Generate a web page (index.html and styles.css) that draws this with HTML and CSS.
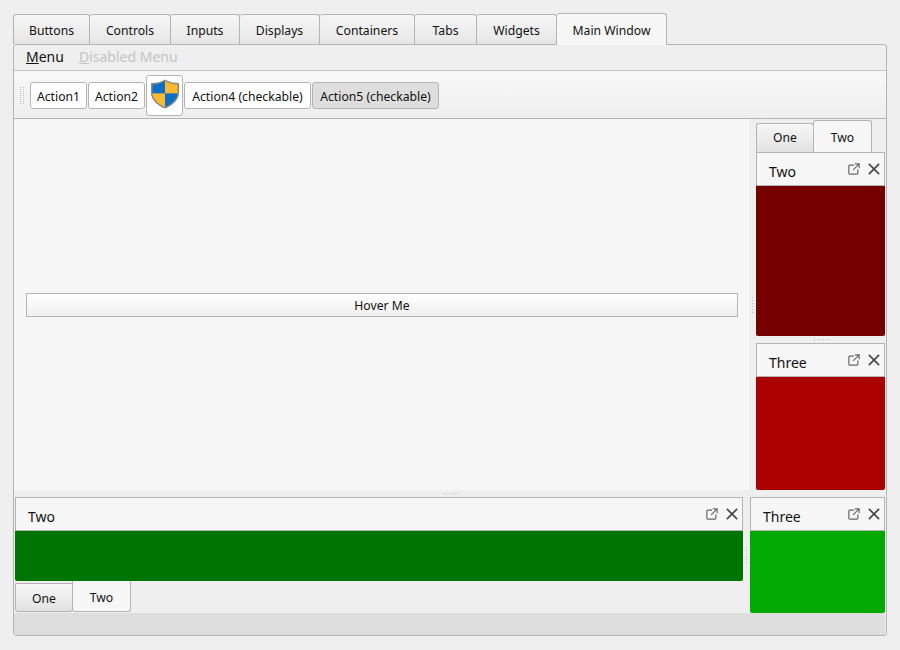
FILE: index.html
```html
<!DOCTYPE html>
<html lang="en">
<head>
<meta charset="UTF-8" />
<title>Main Window</title>
<link rel="stylesheet" href="styles.css">
</head>
<body>

<div class="app">
  <div class="tabs">
    <div class="tab tab-buttons">Buttons</div>
    <div class="tab tab-controls">Controls</div>
    <div class="tab tab-inputs">Inputs</div>
    <div class="tab tab-displays">Displays</div>
    <div class="tab tab-containers">Containers</div>
    <div class="tab tab-tabs">Tabs</div>
    <div class="tab tab-widgets">Widgets</div>
    <div class="tab tab-main active">Main Window</div>
  </div>

  <div class="pane">
    <div class="menubar">
      <span class="menu"><u>M</u>enu</span>
      <span class="menu disabled"><u>D</u>isabled Menu</span>
    </div>

    <div class="toolbar">
      <div class="grip"></div>
      <div class="tool tool-short">Action1</div>
      <div class="tool tool-short">Action2</div>
      <div class="tool tool-icon">
        <svg class="shield" width="28" height="30" viewBox="0 0 28 30">
          <path d="M14 0.500 C10 3 6 4 0 4 V14 C0 21 7 27 14 29.500 C21 27 28 21 28 14 V4 C22 4 18 3 14 0.500 Z" fill="#8a8a80"/>
          <path d="M14 2 C10.500 4.200 6 5.300 1.500 5.400 V14.500 H14 Z" fill="#0f6fc6"/>
          <path d="M14 2 C17.500 4.200 22 5.300 26.500 5.400 V14.500 H14 Z" fill="#fbb92f"/>
          <path d="M1.500 14.500 H14 V28 C8 25.500 1.800 20.500 1.500 14.500 Z" fill="#fbb92f"/>
          <path d="M26.500 14.500 H14 V28 C20 25.500 26.200 20.500 26.500 14.500 Z" fill="#0f6fc6"/>
        </svg>
      </div>
      <div class="tool tool-long">Action4 (checkable)</div>
      <div class="tool tool-long checked">Action5 (checkable)</div>
    </div>

    <div class="middle">
      <div class="central">
        <div class="hover-btn">Hover Me</div>
      </div>
      <div class="right-col">
        <div class="vgrip"></div>
        <div class="right-docks">
          <div class="dock-tabs">
            <div class="dock-tab">One</div>
            <div class="dock-tab active">Two</div>
          </div>
          <div class="dock">
            <div class="dock-title">
              <span class="dock-name">Two</span>
              <svg class="float-icon" viewBox="0 0 14 14"><path d="M7 2.500 H2 Q1 2.500 1 3.500 V12 Q1 13 2 13 H10.500 Q11.500 13 11.500 12 V7.500 M8 1 H13 V6 M13 1 L6 8" fill="none"/></svg>
              <svg class="close-icon" viewBox="0 0 14 14"><path d="M1 1 L13 13 M13 1 L1 13" fill="none"/></svg>
            </div>
            <div class="fill fill-darkred"></div>
          </div>
          <div class="hgrip"></div>
          <div class="dock">
            <div class="dock-title">
              <span class="dock-name">Three</span>
              <svg class="float-icon" viewBox="0 0 14 14"><path d="M7 2.500 H2 Q1 2.500 1 3.500 V12 Q1 13 2 13 H10.500 Q11.500 13 11.500 12 V7.500 M8 1 H13 V6 M13 1 L6 8" fill="none"/></svg>
              <svg class="close-icon" viewBox="0 0 14 14"><path d="M1 1 L13 13 M13 1 L1 13" fill="none"/></svg>
            </div>
            <div class="fill fill-red"></div>
          </div>
        </div>
      </div>
    </div>

    <div class="hgrip hgrip-wide"></div>

    <div class="bottom">
      <div class="bottom-left">
        <div class="dock">
          <div class="dock-title">
            <span class="dock-name">Two</span>
            <svg class="float-icon" viewBox="0 0 14 14"><path d="M7 2.500 H2 Q1 2.500 1 3.500 V12 Q1 13 2 13 H10.500 Q11.500 13 11.500 12 V7.500 M8 1 H13 V6 M13 1 L6 8" fill="none"/></svg>
            <svg class="close-icon" viewBox="0 0 14 14"><path d="M1 1 L13 13 M13 1 L1 13" fill="none"/></svg>
          </div>
          <div class="fill fill-darkgreen"></div>
        </div>
        <div class="dock-tabs south">
          <div class="dock-tab">One</div>
          <div class="dock-tab active">Two</div>
        </div>
      </div>
      <div class="vgrip"></div>
      <div class="dock bottom-right">
        <div class="dock-title">
          <span class="dock-name">Three</span>
          <svg class="float-icon" viewBox="0 0 14 14"><path d="M7 2.500 H2 Q1 2.500 1 3.500 V12 Q1 13 2 13 H10.500 Q11.500 13 11.500 12 V7.500 M8 1 H13 V6 M13 1 L6 8" fill="none"/></svg>
          <svg class="close-icon" viewBox="0 0 14 14"><path d="M1 1 L13 13 M13 1 L1 13" fill="none"/></svg>
        </div>
        <div class="fill fill-green"></div>
      </div>
    </div>

    <div class="statusbar"></div>
  </div>
</div>

</body>
</html>
```

FILE: styles.css
```css
* {
  box-sizing: border-box;
}
body {
  margin: 0;
  height: 650px;
  overflow: hidden;
  background: #efefef;
  color: #111;
  font-family: 'Noto Sans', sans-serif;
  font-size: 12.2px;
}
.app {
  padding: 13px 13px 0 13px;
}

/* top tabs */
.tabs {
  display: flex;
  align-items: flex-end;
  height: 32px;
  margin-bottom: -1px;
  position: relative;
  z-index: 1;
}
.tab {
  height: 30px;
  margin-bottom: 1px;
  padding-top: 2px;
  display: flex;
  align-items: center;
  justify-content: center;
  background: linear-gradient(to bottom, #f6f6f6, #e6e6e6);
  border: 1px solid #b4b4b4;
  border-bottom: none;
  border-left: none;
  border-radius: 3px 3px 0 0;
}
.tab:first-child {
  border-left: 1px solid #b4b4b4;
}
.tab.active {
  height: 32px;
  margin-bottom: 0;
  padding-top: 2px;
  background: #f7f7f7;
}
.tab-buttons { width: 77px; }
.tab-controls { width: 81px; }
.tab-inputs { width: 69px; }
.tab-displays { width: 80px; }
.tab-containers { width: 95px; }
.tab-tabs { width: 62px; }
.tab-widgets { width: 80px; }
.tab-main { width: 110px; }

.pane {
  width: 874px;
  height: 592px;
  border: 1px solid #b4b4b4;
  border-radius: 3px;
  background: #efefef;
  display: flex;
  flex-direction: column;
}

/* menu */
.menubar {
  height: 26px;
  flex: none;
  display: flex;
  align-items: center;
  gap: 15px;
  padding: 0 0 2px 12px;
  border-bottom: 1px solid #c8c8c8;
  font-size: 14px;
}
.menu.disabled {
  color: #c4c4c4;
}

/* toolbar */
.toolbar {
  height: 48px;
  flex: none;
  display: flex;
  align-items: center;
  gap: 1px;
  padding: 2px 0 0 6px;
  background: linear-gradient(to bottom, #f8f8f8, #efefef);
  border-bottom: 1px solid #b4b4b4;
}
.grip {
  width: 4px;
  height: 18px;
  margin-right: 5px;
  background-image: radial-gradient(circle at 0.5px 0.5px, #bbb 0.7px, transparent 0.8px);
  background-size: 3px 2px;
}
.tool {
  height: 27px;
  padding-top: 1px;
  display: flex;
  align-items: center;
  justify-content: center;
  background: #fff;
  border: 1px solid #b4b4b4;
  border-radius: 3px;
}
.tool-short {
  width: 57px;
}
.tool-long {
  width: 127px;
}
.tool-icon {
  height: 41px;
  width: 37px;
  padding: 0;
}
.shield {
  margin-bottom: 3px;
}
.tool.checked {
  background: #dedede;
}

/* central area */
.middle {
  height: 371px;
  flex: none;
  display: flex;
}
.central {
  width: 735px;
  display: flex;
  flex-direction: column;
  justify-content: center;
  padding: 0 11px 0 12px;
  background: #f7f7f7;
}
.hover-btn {
  height: 24px;
  padding-top: 1px;
  display: flex;
  align-items: center;
  justify-content: center;
  background: linear-gradient(to bottom, #ffffff, #efefef);
  border: 1px solid #b4b4b4;
}
.right-col {
  width: 137px;
  display: flex;
  align-items: center;
}
.right-docks {
  width: 129px;
  height: 100%;
  padding-top: 1px;
  display: flex;
  flex-direction: column;
}

/* splitter handles */
.vgrip {
  width: 7px;
  height: 16px;
  flex: none;
  background: repeating-linear-gradient(to bottom, #bbb 0 1px, transparent 1px 3px) center / 1px 100% no-repeat;
}
.hgrip {
  width: 16px;
  height: 7px;
  flex: none;
  align-self: center;
  margin-left: 2px;
  background: repeating-linear-gradient(to right, #bbb 0 1px, transparent 1px 3px) center / 100% 1px no-repeat;
}

/* docks */
.dock-tabs {
  display: flex;
  align-items: flex-end;
  height: 32px;
  flex: none;
}
.dock-tab {
  width: 58px;
  height: 29px;
  padding-bottom: 1px;
  display: flex;
  align-items: center;
  justify-content: center;
  background: linear-gradient(to bottom, #f6f6f6, #e2e2e2);
  border: 1px solid #b4b4b4;
  border-bottom: none;
  border-radius: 3px 3px 0 0;
}
.dock-tab.active {
  height: 32px;
  width: 59px;
  margin-left: -1px;
  padding: 2px 0 0 0;
  background: #f7f7f7;
}
.south {
  align-items: flex-start;
}
.south .dock-tab {
  height: 29px;
  margin-top: 2px;
  padding: 1px 0 0 0;
  border: 1px solid #b4b4b4;
  border-radius: 0 0 3px 3px;
}
.south .dock-tab.active {
  height: 31px;
  margin-top: 0;
  border-top: none;
  padding: 2px 0 0 0;
}
.dock {
  display: flex;
  flex-direction: column;
  flex: none;
}
.dock-title {
  height: 34px;
  flex: none;
  display: flex;
  align-items: center;
  padding: 0 4px 0 12px;
  background: #f7f7f7;
  border: 1px solid #b4b4b4;
  font-size: 14px;
}
.dock-name {
  flex: 1;
  padding-top: 4px;
}
.float-icon {
  width: 12px;
  height: 12px;
  margin: 0 8px 1px 0;
  stroke: #666;
  stroke-width: 1.400;
}
.close-icon {
  width: 12px;
  height: 12px;
  margin-bottom: 1px;
  stroke: #444;
  stroke-width: 1.800;
}
.fill {
  flex: none;
  border-radius: 0 0 2px 2px;
}
.fill-darkred { background: #740000; height: 150px; }
.fill-red { background: #aa0000; height: 113px; }
.fill-darkgreen { background: #007400; height: 50px; }
.fill-green { background: #00aa00; height: 82px; }

/* bottom row */
.bottom {
  height: 116px;
  flex: none;
  display: flex;
  padding-left: 1px;
}
.bottom-left {
  width: 728px;
  flex: none;
}
.bottom .vgrip {
  align-self: center;
}
.bottom-right {
  width: 135px;
}
.statusbar {
  flex: 1;
  margin-right: 1px;
  background: #dedede;
}
```
